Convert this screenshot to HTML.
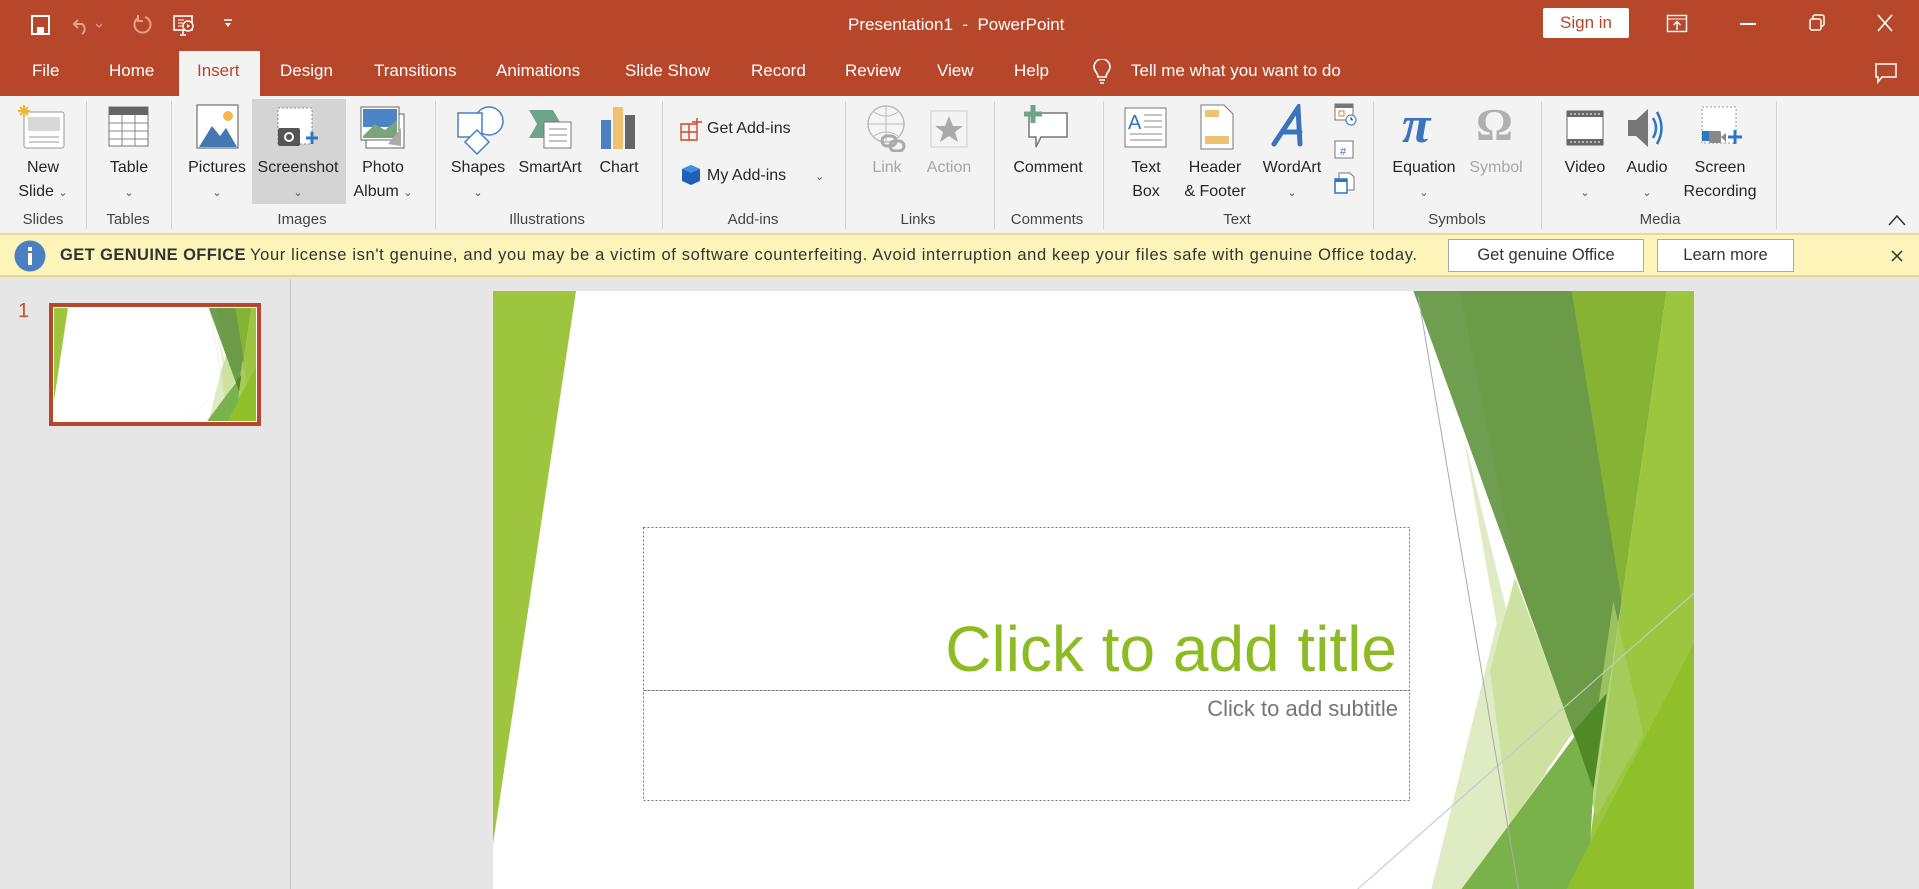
<!DOCTYPE html>
<html><head><meta charset="utf-8">
<style>
*{margin:0;padding:0;box-sizing:border-box}
html{width:1919px;height:889px;overflow:hidden}
body{width:1919px;height:889px;overflow:hidden;background:#e6e6e6;font-family:"Liberation Sans",Arial,sans-serif;position:relative}
.a{position:absolute}
.t{position:absolute;white-space:nowrap}
#title{left:0;top:0;width:1919px;height:96px;background:#b7472a}
.w{color:#fff}
.tab{position:absolute;top:61px;font-size:17px;color:#fff}
#ribbon{left:0;top:96px;width:1919px;height:138px;background:#f3f3f3;border-bottom:1px solid #d6d6d6}
.sep{position:absolute;top:101px;width:1px;height:128px;background:#d4d4d4}
.lbl{position:absolute;font-size:16px;color:#262626;text-align:center;white-space:nowrap;transform:translateX(-50%);line-height:24px}
.grp{position:absolute;top:211px;font-size:15px;color:#444;transform:translateX(-50%);white-space:nowrap}
.car{font-size:11px;color:#555}
.gray{color:#a6a6a6}
</style></head><body>

<div id="title" class="a"></div>
<svg class="a" style="left:30px;top:14px" width="22" height="22" viewBox="0 0 22 22"><rect x="2" y="2" width="17" height="18" fill="none" stroke="#fff" stroke-width="2"/><rect x="7" y="13" width="7" height="7" fill="#fff"/></svg>
<svg class="a" style="left:72px;top:14px" width="34" height="22" viewBox="0 0 34 22"><path d="M6 6 L2 10 L6 14 M2 10 H10 A6 6 0 0 1 10 20" fill="none" stroke="#e3a08f" stroke-width="2"/><path d="M24 10 l3 3 l3 -3" fill="none" stroke="#e3a08f" stroke-width="1.2"/></svg>
<svg class="a" style="left:131px;top:13px" width="22" height="24" viewBox="0 0 22 24"><path d="M14 4 A8 8 0 1 1 7 5" fill="none" stroke="#e3a08f" stroke-width="2"/><path d="M7 2 V8 H12" fill="none" stroke="#e3a08f" stroke-width="2"/></svg>
<svg class="a" style="left:172px;top:13px" width="26" height="26" viewBox="0 0 26 26"><rect x="2" y="3" width="18" height="14" fill="none" stroke="#fff" stroke-width="1.6"/><path d="M6 7h6M6 10h5M6 13h5" stroke="#fff"/><circle cx="16" cy="13" r="5" fill="#b7472a" stroke="#fff" stroke-width="1.4"/><path d="M15 11 l3 2 l-3 2z" fill="#fff"/><path d="M11 17 v5 M8 22 h6" stroke="#fff" stroke-width="1.5"/></svg>
<svg class="a" style="left:223px;top:18px" width="10" height="12" viewBox="0 0 10 12"><path d="M1 2h8" stroke="#fff" stroke-width="1.5"/><path d="M2 5 l3 4 l3 -4z" fill="#fff"/></svg>
<div class="t w" style="left:848px;top:15px;font-size:17px">Presentation1&nbsp; -&nbsp; PowerPoint</div>
<div class="a" style="left:1543px;top:8px;width:86px;height:30px;background:#fff;border-radius:2px;color:#b7472a;font-size:17px;text-align:center;line-height:30px">Sign in</div>
<svg class="a" style="left:1666px;top:14px" width="22" height="20" viewBox="0 0 22 20"><rect x="1.5" y="1.5" width="19" height="16" fill="none" stroke="#fff" stroke-width="1.4"/><path d="M1.5 5h19" stroke="#fff"/><path d="M11 16V8 M7.5 11 L11 7.5 L14.5 11" fill="none" stroke="#fff" stroke-width="1.4"/></svg>
<div class="a" style="left:1740px;top:23px;width:16px;height:2px;background:#fff"></div>
<svg class="a" style="left:1807px;top:13px" width="20" height="20" viewBox="0 0 20 20"><rect x="3" y="6" width="11" height="11" rx="2" fill="none" stroke="#fff" stroke-width="1.5"/><path d="M6 6 V4 a2 2 0 0 1 2 -2 h7 a2 2 0 0 1 2 2 v7 a2 2 0 0 1 -2 2 h-1" fill="none" stroke="#fff" stroke-width="1.5"/></svg>
<svg class="a" style="left:1876px;top:13px" width="18" height="20" viewBox="0 0 18 20"><path d="M2 2 L16 18 M16 2 L2 18" stroke="#fff" stroke-width="1.6"/></svg>

<div class="a" style="left:179px;top:51px;width:81px;height:46px;background:#f3f3f3"></div>
<div class="tab" style="left:32px">File</div>
<div class="tab" style="left:109px">Home</div>
<div class="tab" style="left:197px;color:#b7472a">Insert</div>
<div class="tab" style="left:280px">Design</div>
<div class="tab" style="left:374px">Transitions</div>
<div class="tab" style="left:496px">Animations</div>
<div class="tab" style="left:625px">Slide Show</div>
<div class="tab" style="left:751px">Record</div>
<div class="tab" style="left:845px">Review</div>
<div class="tab" style="left:937px">View</div>
<div class="tab" style="left:1014px">Help</div>
<svg class="a" style="left:1092px;top:59px" width="20" height="28" viewBox="0 0 20 28"><path d="M6 18 C6 14 2 12 2 8 A8 8 0 0 1 18 8 C18 12 14 14 14 18 Z" fill="none" stroke="#fff" stroke-width="1.6"/><path d="M7 21h6M8 24h4" stroke="#fff" stroke-width="1.6"/></svg>
<div class="tab" style="left:1131px">Tell me what you want to do</div>
<svg class="a" style="left:1874px;top:62px" width="24" height="22" viewBox="0 0 24 22"><path d="M2 2 H22 V15 H8 L4 20 V15 H2 Z" fill="none" stroke="#fff" stroke-width="1.5"/></svg>

<div id="ribbon" class="a"></div>
<div class="a" style="left:252px;top:99px;width:94px;height:105px;background:#d4d4d4"></div>

<div class="sep" style="left:86px"></div><div class="sep" style="left:171px"></div><div class="sep" style="left:435px"></div><div class="sep" style="left:662px"></div><div class="sep" style="left:845px"></div><div class="sep" style="left:994px"></div><div class="sep" style="left:1103px"></div><div class="sep" style="left:1373px"></div><div class="sep" style="left:1541px"></div><div class="sep" style="left:1776px"></div>

<svg class="a" style="left:17px;top:104px" width="50" height="48" viewBox="0 0 50 48"><rect x="7" y="8" width="40" height="36" rx="2" fill="#fff" stroke="#999"/><rect x="11" y="13" width="32" height="14" fill="#d8d8d8"/><path d="M12 33h30M12 38h30" stroke="#999"/><g stroke="#f2b632" stroke-width="2"><path d="M7 1v12M1 7h12M3 3l8 8M11 3l-8 8"/></g></svg>
<svg class="a" style="left:108px;top:106px" width="42" height="42" viewBox="0 0 42 42"><rect x="1" y="1" width="39" height="39" fill="#fff" stroke="#777"/><rect x="1" y="1" width="39" height="8" fill="#666"/><path d="M1 17h39M1 25h39M1 33h39M14 9v31M27 9v31" stroke="#888"/></svg>
<svg class="a" style="left:196px;top:104px" width="44" height="46" viewBox="0 0 44 46"><rect x="1" y="1" width="41" height="43" fill="#fff" stroke="#555"/><circle cx="32" cy="12" r="5" fill="#f2b84a"/><path d="M3 43 L16 22 L24 32 L30 24 L41 43Z" fill="#4577b4"/></svg>
<svg class="a" style="left:276px;top:106px" width="46" height="46" viewBox="0 0 46 46"><rect x="2" y="2" width="34" height="36" fill="#fff" stroke="#888" stroke-dasharray="2 2"/><rect x="2" y="22" width="22" height="18" rx="2" fill="#555"/><circle cx="13" cy="31" r="5" fill="#fff"/><circle cx="13" cy="31" r="3" fill="#555"/><path d="M36 26v12M30 32h12" stroke="#2e75c6" stroke-width="3"/></svg>
<svg class="a" style="left:360px;top:106px" width="46" height="46" viewBox="0 0 46 46"><rect x="6" y="8" width="38" height="34" fill="#fff" stroke="#666"/><rect x="1" y="1" width="38" height="33" fill="#fff" stroke="#666"/><rect x="3" y="3" width="34" height="18" fill="#4b85c8"/><path d="M3 30 L15 18 L25 24 L37 14 V32 H3Z" fill="#7aa57c"/><path d="M28 38 L41 22 V40Z" fill="#aaa"/></svg>
<svg class="a" style="left:455px;top:104px" width="50" height="54" viewBox="0 0 50 54"><circle cx="34" cy="17" r="14" fill="#fff" stroke="#4a7fc0" stroke-width="1.5"/><rect x="3" y="9" width="24" height="24" fill="#fff" stroke="#4a7fc0" stroke-width="1.5"/><path d="M22 26 L34 38 L22 50 L10 38 Z" fill="#fff" stroke="#4a7fc0" stroke-width="1.5"/></svg>
<svg class="a" style="left:527px;top:108px" width="46" height="42" viewBox="0 0 46 42"><path d="M2 2 H26 L34 16 L26 30 H2 L10 16Z" fill="#6ea58a"/><rect x="17" y="14" width="27" height="26" fill="#fff" stroke="#777"/><path d="M22 21h18M22 27h18M22 33h18" stroke="#888"/></svg>
<svg class="a" style="left:600px;top:106px" width="38" height="44" viewBox="0 0 38 44"><rect x="1" y="14" width="10" height="29" fill="#4a7fc0"/><rect x="13" y="1" width="10" height="42" fill="#efc272"/><rect x="25" y="9" width="10" height="34" fill="#666"/></svg>
<svg class="a" style="left:680px;top:117px" width="24" height="24" viewBox="0 0 24 24"><path d="M1 7h16v16H1zM1 15h16M9 7v16M17 1v10M12 5h10" fill="none" stroke="#d24726" stroke-width="1.4"/></svg>
<div class="t" style="left:707px;top:120px;font-size:16px;color:#262626">Get Add-ins</div>
<svg class="a" style="left:681px;top:164px" width="20" height="22" viewBox="0 0 20 22"><path d="M10 1 L19 5 V17 L10 21 L1 17 V5Z" fill="#1e62b8"/><path d="M10 1 L19 5 L10 9 L1 5Z" fill="#3f8fe3"/></svg>
<div class="t" style="left:707px;top:167px;font-size:16px;color:#262626">My Add-ins</div>
<div class="t car" style="left:815px;top:170px">&#8964;</div>
<svg class="a" style="left:866px;top:104px" width="42" height="48" viewBox="0 0 42 48"><circle cx="20" cy="20" r="18" fill="#f5f5f5" stroke="#bbb" stroke-width="1.5"/><path d="M2 20h36M20 2v36M8 8 Q20 16 32 8 M8 32 Q20 24 32 32" fill="none" stroke="#bbb"/><rect x="16" y="32" width="14" height="10" rx="5" fill="none" stroke="#aaa" stroke-width="3"/><rect x="24" y="37" width="14" height="10" rx="5" fill="none" stroke="#aaa" stroke-width="3"/></svg>
<svg class="a" style="left:928px;top:108px" width="42" height="42" viewBox="0 0 42 42"><rect x="3" y="3" width="36" height="36" fill="none" stroke="#ccc"/><path d="M21 8 L25 18 L35 18 L27 24 L30 34 L21 28 L12 34 L15 24 L7 18 L17 18Z" fill="#aaa"/></svg>
<svg class="a" style="left:1023px;top:103px" width="50" height="48" viewBox="0 0 50 48"><path d="M6 10 H44 V34 H18 L13 44 V34 H6 Z" fill="#fff" stroke="#777" stroke-width="1.5"/><path d="M10 2v18M1 11h18" stroke="#6ea58a" stroke-width="5"/></svg>
<svg class="a" style="left:1124px;top:107px" width="44" height="42" viewBox="0 0 44 42"><rect x="1" y="1" width="41" height="39" fill="#fff" stroke="#777"/><text x="4" y="22" font-family="Liberation Sans" font-size="20" fill="#2e75c6">A</text><path d="M20 8h18M20 14h18M20 20h18M6 27h32M6 33h32" stroke="#888"/></svg>
<svg class="a" style="left:1200px;top:104px" width="34" height="46" viewBox="0 0 34 46"><path d="M1 1 H24 L33 10 V45 H1Z" fill="#fff" stroke="#777"/><rect x="5" y="6" width="14" height="7" fill="#efc272"/><rect x="5" y="32" width="24" height="8" fill="#efc272"/></svg>
<svg class="a" style="left:1270px;top:104px" width="40" height="48" viewBox="0 0 40 48"><path d="M4 40 L28 4 L30 40 M12 28 H30" fill="none" stroke="#3b74bd" stroke-width="5" stroke-linecap="round"/></svg>
<svg class="a" style="left:1334px;top:103px" width="24" height="24" viewBox="0 0 24 24"><rect x="1" y="1" width="18" height="16" fill="#fff" stroke="#777"/><rect x="1" y="1" width="18" height="4" fill="#777"/><rect x="5" y="8" width="5" height="5" fill="none" stroke="#e07a3a"/><circle cx="17" cy="17" r="5" fill="#fff" stroke="#2e75c6"/><path d="M17 14v3h2" stroke="#2e75c6"/></svg>
<svg class="a" style="left:1334px;top:140px" width="22" height="20" viewBox="0 0 22 20"><rect x="1" y="1" width="18" height="17" fill="#fff" stroke="#777"/><text x="6" y="15" font-family="Liberation Sans" font-size="11" fill="#2e75c6">#</text></svg>
<svg class="a" style="left:1334px;top:172px" width="22" height="24" viewBox="0 0 22 24"><path d="M5 1 H16 L20 5 V18 H5Z" fill="#fff" stroke="#777"/><rect x="1" y="7" width="12" height="14" fill="#fff" stroke="#2e75c6" stroke-width="1.5"/><rect x="1" y="7" width="12" height="3" fill="#2e75c6"/></svg>
<div class="t" style="left:1402px;top:96px;font-family:'Liberation Serif',serif;font-size:52px;color:#3b74bd;font-style:italic;font-weight:bold">π</div>
<div class="t" style="left:1476px;top:98px;font-family:'Liberation Serif',serif;font-size:46px;color:#b0b0b0;font-weight:bold">Ω</div>
<svg class="a" style="left:1566px;top:110px" width="38" height="36" viewBox="0 0 38 36"><rect x="1" y="1" width="36" height="34" fill="#fff" stroke="#666"/><rect x="1" y="1" width="36" height="6" fill="#666"/><rect x="1" y="29" width="36" height="6" fill="#666"/><path d="M4 4h30M4 32h30" stroke="#fff" stroke-dasharray="2 2"/></svg>
<svg class="a" style="left:1626px;top:106px" width="44" height="44" viewBox="0 0 44 44"><path d="M2 14 H10 L22 3 V41 L10 30 H2Z" fill="#777"/><path d="M27 12 Q33 22 27 32 M31 6 Q40 22 31 38" fill="none" stroke="#2e75c6" stroke-width="2.5"/></svg>
<svg class="a" style="left:1700px;top:106px" width="44" height="44" viewBox="0 0 44 44"><rect x="2" y="1" width="34" height="36" fill="#fff" stroke="#999" stroke-dasharray="2 2"/><rect x="2" y="25" width="8" height="10" fill="#2e75c6"/><rect x="9" y="25" width="12" height="12" rx="2" fill="#888"/><path d="M21 31 l5 -4 v9z" fill="#888"/><path d="M35 24v14M28 31h14" stroke="#2e75c6" stroke-width="3"/></svg>

<div class="lbl" style="left:43px;top:156px">New<br>Slide <span class="car">&#8964;</span></div>
<div class="lbl" style="left:129px;top:156px">Table<br><span class="car">&#8964;</span></div>
<div class="lbl" style="left:217px;top:156px">Pictures<br><span class="car">&#8964;</span></div>
<div class="lbl" style="left:298px;top:156px">Screenshot<br><span class="car">&#8964;</span></div>
<div class="lbl" style="left:383px;top:156px">Photo<br>Album <span class="car">&#8964;</span></div>
<div class="lbl" style="left:478px;top:156px">Shapes<br><span class="car">&#8964;</span></div>
<div class="lbl" style="left:550px;top:156px">SmartArt</div>
<div class="lbl" style="left:619px;top:156px">Chart</div>
<div class="lbl gray" style="left:887px;top:156px">Link</div>
<div class="lbl gray" style="left:949px;top:156px">Action</div>
<div class="lbl" style="left:1048px;top:156px">Comment</div>
<div class="lbl" style="left:1146px;top:156px">Text<br>Box</div>
<div class="lbl" style="left:1215px;top:156px">Header<br>&amp; Footer</div>
<div class="lbl" style="left:1292px;top:156px">WordArt<br><span class="car">&#8964;</span></div>
<div class="lbl" style="left:1424px;top:156px">Equation<br><span class="car">&#8964;</span></div>
<div class="lbl gray" style="left:1496px;top:156px">Symbol</div>
<div class="lbl" style="left:1585px;top:156px">Video<br><span class="car">&#8964;</span></div>
<div class="lbl" style="left:1647px;top:156px">Audio<br><span class="car">&#8964;</span></div>
<div class="lbl" style="left:1720px;top:156px">Screen<br>Recording</div>

<div class="grp" style="left:43px">Slides</div>
<div class="grp" style="left:128px">Tables</div>
<div class="grp" style="left:302px">Images</div>
<div class="grp" style="left:547px">Illustrations</div>
<div class="grp" style="left:753px">Add-ins</div>
<div class="grp" style="left:918px">Links</div>
<div class="grp" style="left:1047px">Comments</div>
<div class="grp" style="left:1237px">Text</div>
<div class="grp" style="left:1457px">Symbols</div>
<div class="grp" style="left:1660px">Media</div>
<svg class="a" style="left:1887px;top:213px" width="20" height="14" viewBox="0 0 20 14"><path d="M2 12 L10 3 L18 12" fill="none" stroke="#333" stroke-width="1.5"/></svg>

<div class="a" style="left:0;top:234px;width:1919px;height:43px;background:#fcf4b9;border-top:1px solid #e6dc96;border-bottom:2px solid #e3d88a"></div>
<svg class="a" style="left:14px;top:240px" width="32" height="32" viewBox="0 0 32 32"><circle cx="16" cy="16" r="15.5" fill="#4b7fbf"/><rect x="14" y="13" width="4" height="12" fill="#fff"/><rect x="14" y="7" width="4" height="4" fill="#fff"/></svg>
<div class="t" style="left:60px;top:246px;font-size:16.5px;font-weight:bold;color:#333;letter-spacing:0.4px">GET GENUINE OFFICE</div>
<div class="t" style="left:250px;top:246px;font-size:16.5px;color:#333;letter-spacing:0.65px">Your license isn't genuine, and you may be a victim of software counterfeiting. Avoid interruption and keep your files safe with genuine Office today.</div>
<div class="a" style="left:1448px;top:239px;width:196px;height:33px;background:#fff;border:1px solid #aaa;font-size:16.5px;color:#333;text-align:center;line-height:31px">Get genuine Office</div>
<div class="a" style="left:1657px;top:239px;width:137px;height:33px;background:#fff;border:1px solid #aaa;font-size:16.5px;color:#333;text-align:center;line-height:31px">Learn more</div>
<svg class="a" style="left:1890px;top:249px" width="14" height="14" viewBox="0 0 14 14"><path d="M2 2 L12 12 M12 2 L2 12" stroke="#333" stroke-width="1.5"/></svg>

<div class="a" style="left:290px;top:279px;width:1px;height:610px;background:#c8c8c8"></div>
<div class="t" style="left:18px;top:300px;font-size:20px;color:#c4532f">1</div>
<div class="a" style="left:49px;top:303px;width:212px;height:123px;border:4px solid #b7472a;background:#fff;padding:1px">
<svg width="202" height="113" viewBox="0 0 1201 676" preserveAspectRatio="none" style="display:block"><use href="#sl"/></svg>
</div>

<div class="a" style="left:493px;top:291px;width:1201px;height:598px;overflow:hidden">
<svg width="1201" height="676" viewBox="0 0 1201 676" style="display:block">
<defs>
<clipPath id="cp"><rect width="1201" height="676"/></clipPath>
<g id="sl" clip-path="url(#cp)">
<rect width="1201" height="676" fill="#fff"/>
<path d="M0 0 H83 L0 553Z" fill="#9dc63e"/>
<g transform="translate(907,-6) scale(0.33333,0.3852)">
<path d="M190 390 L620 1900 L0 1900 L290 880Z" fill="#dfebc3"/>
<path d="M345 760 L520 1160 L330 1400 L270 1000Z" fill="#cde2a0"/>
<path d="M40 15 L540 15 L665 820 L580 1310Z" fill="#6f9e50"/>
<path d="M180 15 L540 15 L665 820 L580 1310 L350 760Z" fill="#69993f" opacity="0.6"/>
<path d="M515 15 L800 15 L665 820Z" fill="#86b333"/>
<path d="M800 15 L882 15 L882 1900 L500 1900 L665 820Z" fill="#9cc63f"/>
<path d="M640 820 L730 1170 L590 1380 L560 1300Z" fill="#a7cc63" opacity="0.8"/>
<path d="M-100 1900 L620 1060 L580 1310 L540 1900Z" fill="#79b14a"/>
<path d="M520 1160 L620 1060 L580 1310Z" fill="#4f8a27"/>
<path d="M882 930 L882 1900 L300 1900Z" fill="#8fc02b"/>
<path d="M-300 1700 L882 800" stroke="#c8c8c8" stroke-width="3"/>
<path d="M55 30 L420 1900" stroke="#aaa" stroke-width="3"/>
</g>
</g>
</defs>
<use href="#sl"/>
<rect x="150.5" y="236.5" width="766" height="163" fill="none" stroke="#777" stroke-dasharray="2 2"/>
<rect x="150.5" y="399.5" width="766" height="110" fill="none" stroke="#777" stroke-dasharray="2 2"/>
<text x="904" y="380" text-anchor="end" font-family="Liberation Sans, sans-serif" font-size="64" fill="#8dbb23">Click to add title</text>
<text x="905" y="425" text-anchor="end" font-family="Liberation Sans, sans-serif" font-size="22" fill="#767676">Click to add subtitle</text>
</svg>
</div>
</body></html>
